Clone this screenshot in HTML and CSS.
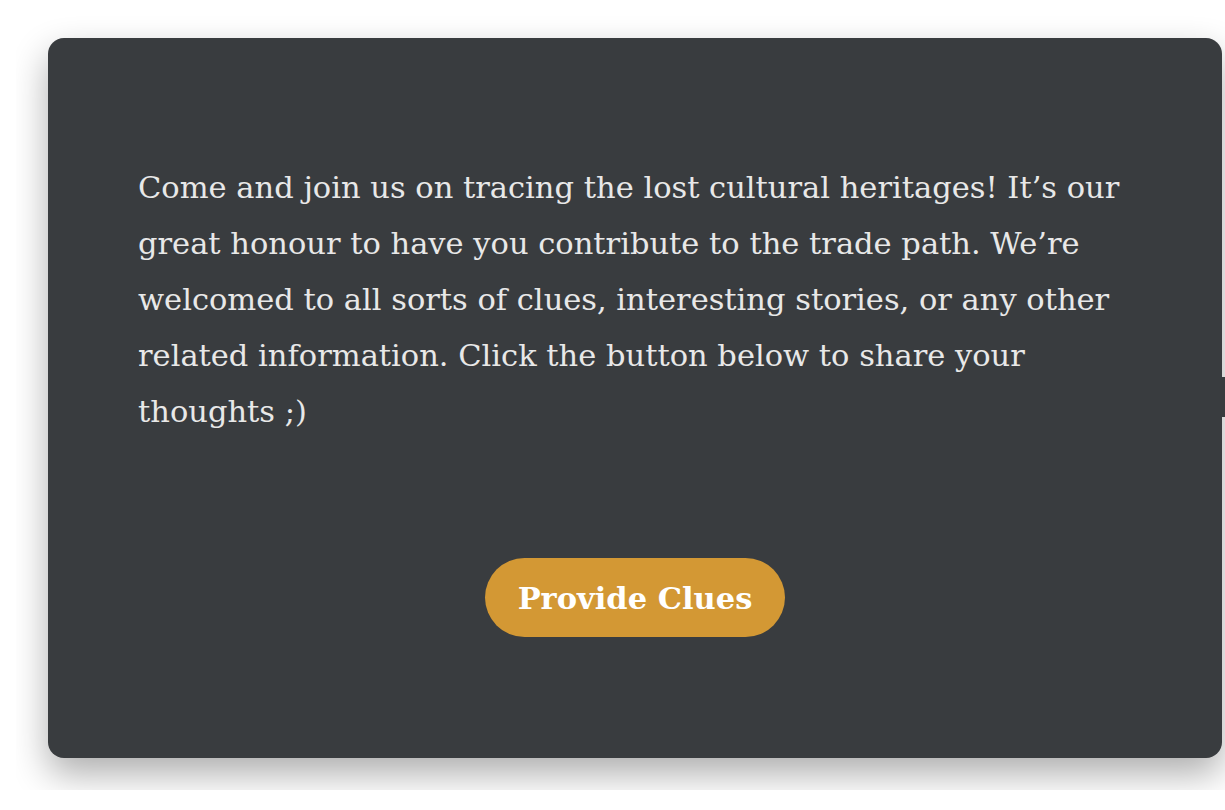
FILE: index.html
```html
<!DOCTYPE html>
<html>
<head>
<meta charset="utf-8">
<link rel="stylesheet" href="styles.css">
</head>
<body>
<div class="stage">
  <div class="card">
    <p class="message">Come and join us on tracing the lost cultural heritages! It’s our great honour to have you contribute to the trade path. We’re welcomed to all sorts of clues, interesting stories, or any other related information. Click the button below to share your thoughts ;)</p>
    <button class="cta">Provide Clues</button>
  </div>
  <div class="edge-tab"></div>
</div>
</body>
</html>
```

FILE: styles.css
```css
html, body {
  margin: 0;
  padding: 0;
  background: #ffffff;
}
.stage {
  position: relative;
  margin-left: 16px;
  height: 790px;
  overflow: hidden;
  padding: 38px 0 0 32px;
  box-sizing: border-box;
  width: 1240px;
}
.card {
  width: 1174px;
  height: 720px;
  box-sizing: border-box;
  background: #393c3f;
  border-radius: 16px;
  box-shadow: 0 16px 36px rgba(0, 0, 0, 0.32);
  padding: 122px 90px 0 90px;
  display: flex;
  flex-direction: column;
  align-items: center;
}
.message {
  margin: 0;
  align-self: stretch;
  font-family: "DejaVu Serif", serif;
  font-size: 30.5px;
  line-height: 56px;
  color: #e8e8e8;
}
.cta {
  margin-top: 118px;
  width: 300px;
  height: 79px;
  border: none;
  border-radius: 40px;
  background: #d39834;
  color: #ffffff;
  font-family: "DejaVu Serif", serif;
  font-weight: bold;
  font-size: 30.5px;
  padding: 0;
  cursor: pointer;
}
.edge-tab {
  position: absolute;
  left: 1206px;
  top: 377px;
  width: 20px;
  height: 40px;
  background: #393c3f;
}
```
